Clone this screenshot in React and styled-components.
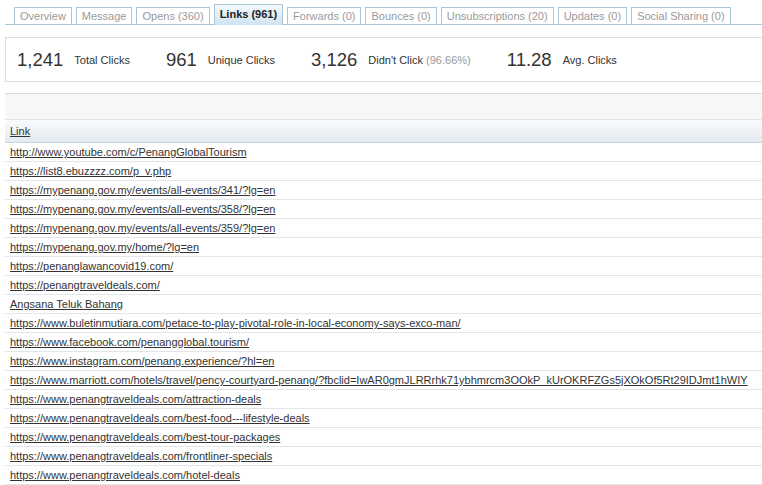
import React from "react";
import styled, { createGlobalStyle } from "styled-components";

const GlobalStyle = createGlobalStyle`
  html, body {
    margin: 0;
    padding: 0;
    background: #fff;
    overflow: hidden;
  }
  body {
    font-family: "Liberation Sans", Arial, sans-serif;
    color: #333;
  }
`;

const tabs = [
  { label: "Overview" },
  { label: "Message" },
  { label: "Opens (360)" },
  { label: "Links (961)", active: true },
  { label: "Forwards (0)" },
  { label: "Bounces (0)" },
  { label: "Unsubscriptions (20)" },
  { label: "Updates (0)" },
  { label: "Social Sharing (0)" }
];

const stats = [
  { value: "1,241", label: "Total Clicks" },
  { value: "961", label: "Unique Clicks" },
  { value: "3,126", label: "Didn't Click", note: "(96.66%)" },
  { value: "11.28", label: "Avg. Clicks" }
];

const links = [
  "http://www.youtube.com/c/PenangGlobalTourism",
  "https://list8.ebuzzzz.com/p_v.php",
  "https://mypenang.gov.my/events/all-events/341/?lg=en",
  "https://mypenang.gov.my/events/all-events/358/?lg=en",
  "https://mypenang.gov.my/events/all-events/359/?lg=en",
  "https://mypenang.gov.my/home/?lg=en",
  "https://penanglawancovid19.com/",
  "https://penangtraveldeals.com/",
  "Angsana Teluk Bahang",
  "https://www.buletinmutiara.com/petace-to-play-pivotal-role-in-local-economy-says-exco-man/",
  "https://www.facebook.com/penangglobal.tourism/",
  "https://www.instagram.com/penang.experience/?hl=en",
  "https://www.marriott.com/hotels/travel/pency-courtyard-penang/?fbclid=IwAR0gmJLRRrhk71ybhmrcm3OOkP_kUrOKRFZGs5jXOkOf5Rt29IDJmt1hWIY",
  "https://www.penangtraveldeals.com/attraction-deals",
  "https://www.penangtraveldeals.com/best-food---lifestyle-deals",
  "https://www.penangtraveldeals.com/best-tour-packages",
  "https://www.penangtraveldeals.com/frontliner-specials",
  "https://www.penangtraveldeals.com/hotel-deals"
];

function App() {
  return (
    <>
      <GlobalStyle />
      <Page>
        <TabBar>
          {tabs.map((t) => (
            <Tab key={t.label} $active={t.active}>
              {t.label}
            </Tab>
          ))}
        </TabBar>

        <StatsBox>
          {stats.map((s) => (
            <Stat key={s.label}>
              <StatValue>{s.value}</StatValue>
              <StatLabel>
                {s.label}
                {s.note && <StatNote> {s.note}</StatNote>}
              </StatLabel>
            </Stat>
          ))}
        </StatsBox>

        <Table>
          <thead>
            <BlankRow>
              <th></th>
            </BlankRow>
            <HeadRow>
              <th>
                <LinkText href="#">Link</LinkText>
              </th>
            </HeadRow>
          </thead>
          <tbody>
            {links.map((l, i) => (
              <Row key={i}>
                <td>
                  <LinkText href="#">{l}</LinkText>
                </td>
              </Row>
            ))}
          </tbody>
        </Table>
      </Page>
    </>
  );
}

const Page = styled.div`
  padding: 4px 0 0 5px;
  overflow: hidden;
`;

const TabBar = styled.div`
  display: flex;
  align-items: flex-end;
  gap: 4px;
  padding-left: 9px;
  border-bottom: 1px solid #a9c6d6;
  height: 20px;
`;

const Tab = styled.div`
  font-size: 11px;
  height: ${(p) => (p.$active ? "19px" : "16px")};
  line-height: ${(p) => (p.$active ? "19px" : "16px")};
  padding: 0 5px;
  border: 1px solid #a9c6d6;
  border-bottom: none;
  background: ${(p) =>
    p.$active ? "linear-gradient(#f4f9fd, #cfe3f1)" : "#fff"};
  color: ${(p) => (p.$active ? "#222" : "#9a9a9a")};
  font-weight: ${(p) => (p.$active ? "bold" : "normal")};
  white-space: nowrap;
  margin-bottom: ${(p) => (p.$active ? "-1px" : "0")};
  padding-bottom: ${(p) => (p.$active ? "1px" : "0")};
`;

const StatsBox = styled.div`
  display: flex;
  align-items: center;
  margin-top: 12px;
  height: 43px;
  padding-left: 11px;
  border: 1px solid #dedede;
  border-right: none;
`;

const Stat = styled.div`
  display: flex;
  align-items: center;
  gap: 11px;
  margin-right: 36px;
`;

const StatValue = styled.span`
  font-size: 18.5px;
  color: #333;
`;

const StatLabel = styled.span`
  font-size: 11px;
  color: #333;
`;

const StatNote = styled.span`
  color: #999;
`;

const Table = styled.table`
  margin-top: 11px;
  width: 100%;
  border-collapse: collapse;
  font-size: 11px;
  th {
    text-align: left;
    font-weight: normal;
    padding: 0 5px;
  }
  td {
    padding: 0 5px;
    white-space: nowrap;
  }
`;

const BlankRow = styled.tr`
  height: 26px;
  background: #f7f7f7;
  border-top: 1px solid #dcdcdc;
  border-bottom: 1px solid #e0e3e6;
`;

const HeadRow = styled.tr`
  height: 23px;
  background: linear-gradient(#fafbfc, #e2eaf1);
  border-bottom: 1px solid #c9d6df;
`;

const Row = styled.tr`
  height: 19px;
  border-bottom: 1px solid #e3e6e8;
`;

const LinkText = styled.a`
  color: #333;
  text-decoration: underline;
`;

export default App;
